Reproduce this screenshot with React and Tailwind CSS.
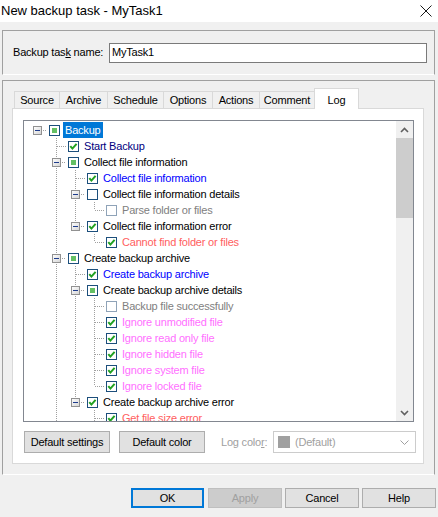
import React from 'react';

const tree = [
  {
    label: 'Backup', state: 'mixed', selected: true, children: [
      { label: 'Start Backup', state: 'on', color: 'text-[#000080]' },
      {
        label: 'Collect file information', state: 'mixed', children: [
          { label: 'Collect file information', state: 'on', color: 'text-[#0000ff]' },
          {
            label: 'Collect file information details', state: 'off', children: [
              { label: 'Parse folder or files', state: 'off', color: 'text-[#808080]', dim: true },
            ],
          },
          {
            label: 'Collect file information error', state: 'on', children: [
              { label: 'Cannot find folder or files', state: 'on', color: 'text-[#ff6060]' },
            ],
          },
        ],
      },
      {
        // more siblings follow below the visible part
        label: 'Create backup archive', state: 'mixed', more: true, children: [
          { label: 'Create backup archive', state: 'on', color: 'text-[#0000ff]' },
          {
            label: 'Create backup archive details', state: 'mixed', children: [
              { label: 'Backup file successfully', state: 'off', color: 'text-[#808080]', dim: true },
              { label: 'Ignore unmodified file', state: 'on', color: 'text-[#ff70ff]' },
              { label: 'Ignore read only file', state: 'on', color: 'text-[#ff70ff]' },
              { label: 'Ignore hidden file', state: 'on', color: 'text-[#ff70ff]' },
              { label: 'Ignore system file', state: 'on', color: 'text-[#ff70ff]' },
              { label: 'Ignore locked file', state: 'on', color: 'text-[#ff70ff]' },
            ],
          },
          {
            label: 'Create backup archive error', state: 'on', children: [
              { label: 'Get file size error', state: 'on', color: 'text-[#ff6060]', more: true },
            ],
          },
        ],
      },
    ],
  },
];

function flatten(nodes, level, ancestors, out) {
  nodes.forEach((n, i) => {
    const hasNext = i < nodes.length - 1 || !!n.more;
    out.push({ ...n, level, ancestors, hasNext, hasKids: !!(n.children && n.children.length) });
    if (n.children) flatten(n.children, level + 1, [...ancestors, hasNext], out);
  });
  return out;
}

const rows = flatten(tree, 0, [], []);

// one 19px column of tree lines
function LineCol({ full, top, bottom, node, kids }) {
  const line = { stroke: '#a0a0a0', strokeDasharray: '1 1', shapeRendering: 'crispEdges' };
  return (
    <svg width="19" height="16" className="shrink-0 block">
      {full && <line x1="9.5" y1="0" x2="9.5" y2="16" {...line} />}
      {top && <line x1="9.5" y1="0" x2="9.5" y2="8" {...line} />}
      {bottom && <line x1="9.5" y1="8" x2="9.5" y2="16" {...line} />}
      {node && <line x1={kids ? 15 : 10} y1="8.5" x2="19" y2="8.5" {...line} />}
      {kids && (
        <g shapeRendering="crispEdges">
          <defs>
            <linearGradient id="exp" x1="0" y1="0" x2="1" y2="1">
              <stop offset="0" stopColor="#ffffff" />
              <stop offset="1" stopColor="#d4d4d4" />
            </linearGradient>
          </defs>
          <rect x="5.5" y="4.5" width="8" height="8" fill="url(#exp)" stroke="#919191" />
          <line x1="7" y1="8.5" x2="12" y2="8.5" stroke="#1e3c8c" />
        </g>
      )}
    </svg>
  );
}

function Check({ state, dim }) {
  return (
    <svg width="11" height="11" className="shrink-0 block ml-[2px]">
      <rect x="0.5" y="0.5" width="10" height="10" fill="#fff" stroke={dim ? '#8fa3b8' : '#1c4f7c'} shapeRendering="crispEdges" />
      {state === 'on' && (
        <path d="M2.3 5.2 L4.4 7.6 L8.6 2.8" fill="none" stroke="#21a121" strokeWidth="2" />
      )}
      {state === 'mixed' && <rect x="3" y="3" width="5" height="5" fill="#64c064" />}
    </svg>
  );
}

function TreeRow({ r }) {
  const cols = [];
  for (let j = 0; j < r.level; j++) {
    cols.push(<LineCol key={j} full={r.ancestors[j]} />);
  }
  cols.push(
    <LineCol key="own" top={r.level > 0} bottom={r.hasNext} node kids={r.hasKids} />
  );
  return (
    <div className="flex items-center h-4 whitespace-nowrap">
      {cols}
      <Check state={r.state} dim={r.dim} />
      <span
        className={
          'ml-[3px] px-[2px] h-4 leading-4 ' +
          (r.selected ? 'bg-[#0078d7] text-white' : r.color || 'text-black')
        }
      >
        {r.label}
      </span>
    </div>
  );
}

function Chevron({ down }) {
  return (
    <svg width="9" height="6" className="block">
      <path
        d={down ? 'M1 1 L4.5 4.5 L8 1' : 'M1 5 L4.5 1.5 L8 5'}
        fill="none"
        stroke="#606060"
        strokeWidth="1.6"
      />
    </svg>
  );
}

function Btn({ children, className = '' }) {
  return (
    <div
      className={
        'h-[22px] flex items-center justify-center bg-[#e1e1e1] border border-[#adadad] text-black ' +
        className
      }
    >
      {children}
    </div>
  );
}

const tabs = [
  ['Source', 'w-[45px]'],
  ['Archive', 'w-[48px]'],
  ['Schedule', 'w-[56px]'],
  ['Options', 'w-[49px]'],
  ['Actions', 'w-[47px]'],
  ['Comment', 'w-[55px]'],
];

export default function App() {
  return (
    <div className="w-[438px] h-[517px] overflow-hidden bg-[#f0f0f0] font-['Liberation_Sans',Arial,sans-serif] text-[11px] tracking-[-0.2px] text-black">
      {/* title bar */}
      <div className="h-[22px] bg-white flex items-center justify-between">
        <span className="text-[13px] tracking-normal pl-px">New backup task - MyTask1</span>
        <svg width="12" height="12" className="mr-[6px]">
          <path d="M0.5 0.5 L11.5 11.5 M11.5 0.5 L0.5 11.5" stroke="#000" strokeWidth="0.9" />
        </svg>
      </div>

      <div className="pl-[2px] pr-[3px] pt-2">
        {/* task name */}
        <div className="h-[45px] border border-[#a0a0a0] border-b-white flex items-center pl-[10px] pr-[7px]">
          <span className="w-[96px] shrink-0">
            Backup tas<span className="underline">k</span> name:
          </span>
          <div className="flex-1 h-[20px] border border-[#7a7a7a] bg-white flex items-center pl-[2px]">
            MyTask1
          </div>
        </div>

        {/* tabs frame */}
        <div className="mt-[5px] h-[395px] border border-[#a0a0a0] border-b-white pt-[7px] pl-[9px] pr-[10px]">
          <div className="flex items-end h-[20px] pl-[2px]">
            {tabs.map(([t, w]) => (
              <div
                key={t}
                className={w + ' h-[17px] border-l border-t border-[#d9d9d9] flex items-center justify-center'}
              >
                {t}
              </div>
            ))}
            <div className="relative z-10 w-[45px] h-[21px] -mb-px bg-white border-l border-t border-r border-[#d9d9d9] flex items-start justify-center pt-[3px]">
              Log
            </div>
          </div>

          <div className="h-[356px] bg-white border border-[#d9d9d9] pt-[11px] pl-[10px] pr-[9px]">
            {/* tree view */}
            <div className="w-[391px] h-[302px] border border-[#828790] flex">
              <div className="flex-1 overflow-hidden pt-px pl-[4px]">
                {rows.map((r, i) => (
                  <TreeRow key={i} r={r} />
                ))}
              </div>
              <div className="w-[17px] bg-[#f0f0f0] flex flex-col">
                <div className="h-[17px] flex items-center justify-center">
                  <Chevron />
                </div>
                <div className="h-[80px] bg-[#cdcdcd]" />
                <div className="flex-1" />
                <div className="h-[17px] flex items-center justify-center">
                  <Chevron down />
                </div>
              </div>
            </div>

            <div className="mt-[9px] flex items-center">
              <Btn className="w-[86px] ml-px">Default settings</Btn>
              <Btn className="w-[86px] ml-[9px]">Default color</Btn>
              <span className="ml-[16px] text-[#a0a0a0]">
                Log colo<span className="underline">r</span>:
              </span>
              <div className="ml-auto -mr-[2px] w-[143px] h-[22px] border border-[#cccccc] bg-white flex items-center pl-[4px] pr-[6px]">
                <div className="w-[12px] h-[12px] bg-[#a0a0a0]" />
                <span className="ml-[5px] text-[#a0a0a0] flex-1">(Default)</span>
                <svg width="9" height="5" className="block">
                  <path d="M0.5 0.5 L4.5 4.5 L8.5 0.5" fill="none" stroke="#a0a0a0" strokeWidth="1" />
                </svg>
              </div>
            </div>
          </div>
        </div>

        {/* dialog buttons */}
        <div className="mt-[13px] flex justify-end -mr-px">
          <div className="w-[73px] h-[20px] border-2 border-[#0078d7] bg-[#e1e1e1] flex items-center justify-center">
            OK
          </div>
          <div className="ml-[4px] w-[74px] h-[20px] border border-[#bfbfbf] bg-[#cccccc] text-[#a0a0a0] flex items-center justify-center">
            Apply
          </div>
          <div className="ml-[3px] w-[74px] h-[20px] border border-[#adadad] bg-[#e1e1e1] flex items-center justify-center">
            Cancel
          </div>
          <div className="ml-[3px] w-[74px] h-[20px] border border-[#adadad] bg-[#e1e1e1] flex items-center justify-center">
            Help
          </div>
        </div>
      </div>
    </div>
  );
}
